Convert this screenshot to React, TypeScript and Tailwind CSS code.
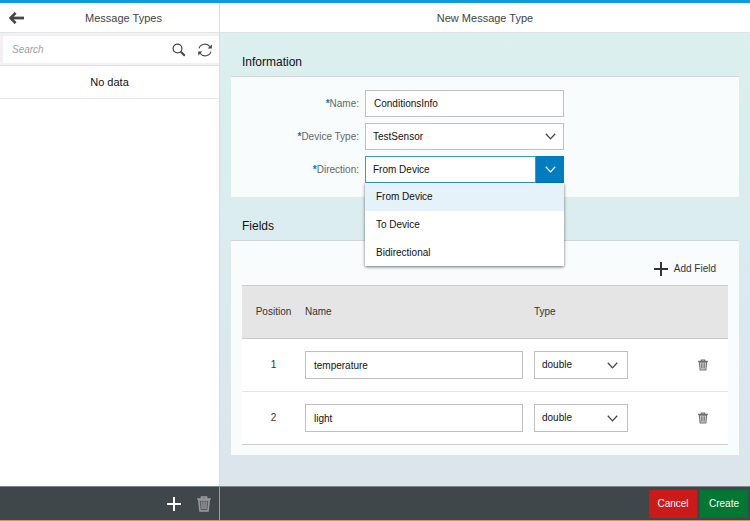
import { useState } from 'react';

type Field = { name: string; type: string };

const directions = ['From Device', 'To Device', 'Bidirectional'];
const types = ['double', 'string', 'integer', 'boolean'];

function BackIcon() {
    return (
        <svg width="15" height="12" viewBox="0 0 15 12" fill="none" stroke="#454545" aria-hidden="true">
            <path d="M2.5 6H15" strokeWidth="2.8" />
            <path d="M6.6 0.8L1.6 6L6.6 11.2" strokeWidth="2.6" />
        </svg>
    );
}

function SearchIcon() {
    return (
        <svg width="14" height="14" viewBox="0 0 14 14" fill="none" stroke="#454545" aria-hidden="true">
            <circle cx="5.5" cy="5.5" r="4.4" strokeWidth="1.2" />
            <path d="M8.8 8.8L12.8 12.8" strokeWidth="2" />
        </svg>
    );
}

function RefreshIcon() {
    return (
        <svg width="14" height="14" viewBox="0 0 14 14" fill="none" stroke="#454545" strokeWidth="1.1" aria-hidden="true">
            <path d="M1 5.4C2.4 0.6 9 -0.4 12 3.8" />
            <path d="M13 8.6C11.6 13.4 5 14.4 2 10.2" />
            <path d="M13.8 1.4V5.6H9.6Z" fill="#454545" stroke="none" />
            <path d="M0.2 12.6V8.4H4.4Z" fill="#454545" stroke="none" />
        </svg>
    );
}

function PlusIcon() {
    return (
        <svg width="14" height="14" viewBox="0 0 14 14" fill="none" stroke="currentColor" strokeWidth="2" aria-hidden="true">
            <path d="M7 0V14M0 7H14" />
        </svg>
    );
}

function TrashIcon({ className }: { className: string }) {
    return (
        <svg viewBox="0 0 14 16" fill="none" stroke="currentColor" className={className} aria-hidden="true">
            <path d="M1.8 4L3 15H11L12.2 4Z" fill="currentColor" fillOpacity="0.25" strokeWidth="1.5" />
            <path d="M0.2 3H13.8M4.6 2.6V1H9.4V2.6" strokeWidth="1.7" />
            <path d="M4.7 5.5L5.2 13M7 5.5V13M9.3 5.5L8.8 13" strokeWidth="1.2" />
        </svg>
    );
}

function ChevronIcon() {
    return (
        <svg width="11" height="7" viewBox="0 0 11 7" fill="none" stroke="currentColor" strokeWidth="1.3" aria-hidden="true">
            <path d="M0.8 0.8L5.5 5.9L10.2 0.8" />
        </svg>
    );
}

function RequiredLabel({ htmlFor, text }: { htmlFor: string; text: string }) {
    return (
        <label htmlFor={htmlFor} className="text-right text-[#666]">
            <span className="font-bold text-[#007cc0]">*</span>{text}:
        </label>
    );
}

function App() {
    const [name, setName] = useState<string>('ConditionsInfo');
    const [direction, setDirection] = useState<string>('From Device');
    const [open, setOpen] = useState<boolean>(true);
    const [fields, setFields] = useState<Field[]>([
        { name: 'temperature', type: 'double' },
        { name: 'light', type: 'double' },
    ]);

    const updateField = (index: number, patch: Partial<Field>) => {
        setFields(fields.map((field, i) => (i === index ? { ...field, ...patch } : field)));
    };

    return (
        <div className="flex flex-col min-h-screen border-t-3 border-[#109ade] border-b border-b-[#e58a64] bg-white font-['Liberation_Sans',Arial,sans-serif] text-[10px] leading-4 text-[#111]">
            <div className="flex flex-1">
                <aside className="flex flex-col w-55 shrink-0 border-r border-[#d9dddf]">
                    <header className="flex items-center h-[30px] pl-[9px] pr-7 border-b border-[#dfe3e4]">
                        <button type="button" aria-label="Back"><BackIcon /></button>
                        <h1 className="flex-1 pl-8 text-center text-[11px] text-[#444]">Message Types</h1>
                    </header>
                    <div className="pt-[3px] pb-0.5 pl-[3px] bg-[#f3eff2] border-b border-[#e2e2e2]">
                        <form className="flex items-center gap-3 h-[27px] pl-[9px] pr-[7px] bg-white" onSubmit={e => e.preventDefault()}>
                            <input type="search" placeholder="Search" aria-label="Search"
                                className="flex-1 min-w-0 outline-none placeholder:italic placeholder:text-[#a0a0a0]" />
                            <button type="submit" aria-label="Search"><SearchIcon /></button>
                            <button type="button" aria-label="Refresh"><RefreshIcon /></button>
                        </form>
                    </div>
                    <p className="py-2 text-center text-[11px] border-b border-[#e8e8e8]">No data</p>
                </aside>

                <main className="flex-1 min-w-0 bg-linear-to-b from-[#dcf0ee] via-[#daecef] to-[#dce4ec]">
                    <header className="flex items-center justify-center h-[30px] bg-white border-b border-[#dfe3e4]">
                        <h1 className="text-[11px] text-[#444]">New Message Type</h1>
                    </header>

                    <section className="px-[11px]">
                        <h2 className="pt-[21px] pb-1.5 px-[11px] text-[12px]">Information</h2>
                        <div className="grid grid-cols-[128px_1fr] items-center gap-x-1.5 gap-y-1.5 pt-[13px] pb-3.5 pr-[175px] border-t border-[#d0d6d7] bg-[#f8fcfd]">
                            <RequiredLabel htmlFor="name" text="Name" />
                            <input id="name" value={name} onChange={e => setName(e.currentTarget.value)} required
                                className="w-full h-[27px] px-2 bg-white border border-[#bfbfbf]" />

                            <RequiredLabel htmlFor="device" text="Device Type" />
                            <div className="relative flex">
                                <select id="device" className="w-full h-[27px] px-[7px] bg-white border border-[#bfbfbf] appearance-none">
                                    <option>TestSensor</option>
                                </select>
                                <span className="absolute right-2 inset-y-0 flex items-center pointer-events-none text-[#444]"><ChevronIcon /></span>
                            </div>

                            <RequiredLabel htmlFor="direction" text="Direction" />
                            <div className="relative flex">
                                <input id="direction" role="combobox" aria-expanded={open} aria-controls="directions" value={direction} readOnly
                                    className="flex-1 min-w-0 h-[27px] px-[7px] bg-white border border-[#3d9bd4] outline-none" />
                                <button type="button" aria-label="Toggle directions" onClick={() => setOpen(!open)}
                                    className="flex items-center justify-center w-7 bg-[#007cc0] text-white">
                                    <ChevronIcon />
                                </button>
                                {open && (
                                    <ul id="directions" role="listbox" className="absolute z-10 inset-x-0 top-full bg-white shadow-[0_1px_3px_rgba(0,0,0,0.55)]">
                                        {directions.map(item => (
                                            <li key={item} role="option" aria-selected={item === direction}
                                                onClick={() => { setDirection(item); setOpen(false); }}
                                                className="px-[11px] py-1.5 last:pb-[5px] cursor-pointer aria-selected:bg-[#e5f2f9]">
                                                {item}
                                            </li>
                                        ))}
                                    </ul>
                                )}
                            </div>
                        </div>
                    </section>

                    <section className="px-[11px] pb-[30px]">
                        <h2 className="pt-[21px] pb-1.5 px-[11px] text-[12px]">Fields</h2>
                        <div className="px-[11px] pb-2.5 border-t border-[#d0d6d7] bg-[#f8fcfd]">
                            <div className="flex justify-end pt-5 pr-3 pb-2">
                                <button type="button" onClick={() => setFields([...fields, { name: '', type: 'double' }])}
                                    className="flex items-center gap-1.5 text-[#333]">
                                    <PlusIcon />Add Field
                                </button>
                            </div>
                            <table className="w-full table-fixed bg-white border-y border-[#ccc]">
                                <thead>
                                    <tr className="h-[53px] bg-[#e5e5e5] border-b border-[#ccc] text-left text-[#333]">
                                        <th className="w-[63px] font-normal text-center">Position</th>
                                        <th className="font-normal">Name</th>
                                        <th className="w-36 font-normal">Type</th>
                                        <th className="w-[50px]" aria-label="Actions"></th>
                                    </tr>
                                </thead>
                                <tbody>
                                    {fields.map((field, index) => (
                                        <tr key={index} className="h-[53px] border-b border-[#e5e5e5] last:border-[#ccc]">
                                            <td className="text-center text-[#333]">{index + 1}</td>
                                            <td className="pr-[11px]">
                                                <input aria-label="Field name" value={field.name}
                                                    onChange={e => updateField(index, { name: e.currentTarget.value })}
                                                    className="block w-full h-7 px-2 bg-white border border-[#bfbfbf]" />
                                            </td>
                                            <td>
                                                <div className="relative flex w-[94px]">
                                                    <select aria-label="Field type" value={field.type}
                                                        onChange={e => updateField(index, { type: e.currentTarget.value })}
                                                        className="w-full h-7 px-[7px] bg-white border border-[#bfbfbf] appearance-none">
                                                        {types.map(type => <option key={type}>{type}</option>)}
                                                    </select>
                                                    <span className="absolute right-2.5 inset-y-0 flex items-center pointer-events-none text-[#444]"><ChevronIcon /></span>
                                                </div>
                                            </td>
                                            <td>
                                                <button type="button" aria-label="Delete field" onClick={() => setFields(fields.filter((_, i) => i !== index))}
                                                    className="block mx-auto text-[#707070]">
                                                    <TrashIcon className="w-2.5 h-3" />
                                                </button>
                                            </td>
                                        </tr>
                                    ))}
                                </tbody>
                            </table>
                        </div>
                    </section>
                </main>
            </div>

            <footer className="flex h-[34px] border-t border-[#7d868a] bg-[#3f474a] text-white">
                <div className="flex items-center justify-end gap-4 w-55 shrink-0 pr-2 border-r border-[#98a0a5]">
                    <button type="button" aria-label="Add message type"><PlusIcon /></button>
                    <button type="button" aria-label="Delete message type" className="text-[#9a9d9e]"><TrashIcon className="w-3.5 h-4" /></button>
                </div>
                <div className="flex flex-1 items-center justify-end gap-[3px] pr-0.5">
                    <button type="button" className="w-12 h-7 bg-[#cc1919]">Cancel</button>
                    <button type="button" className="w-12 h-7 bg-[#007833]">Create</button>
                </div>
            </footer>
        </div>
    );
}

export default App;
